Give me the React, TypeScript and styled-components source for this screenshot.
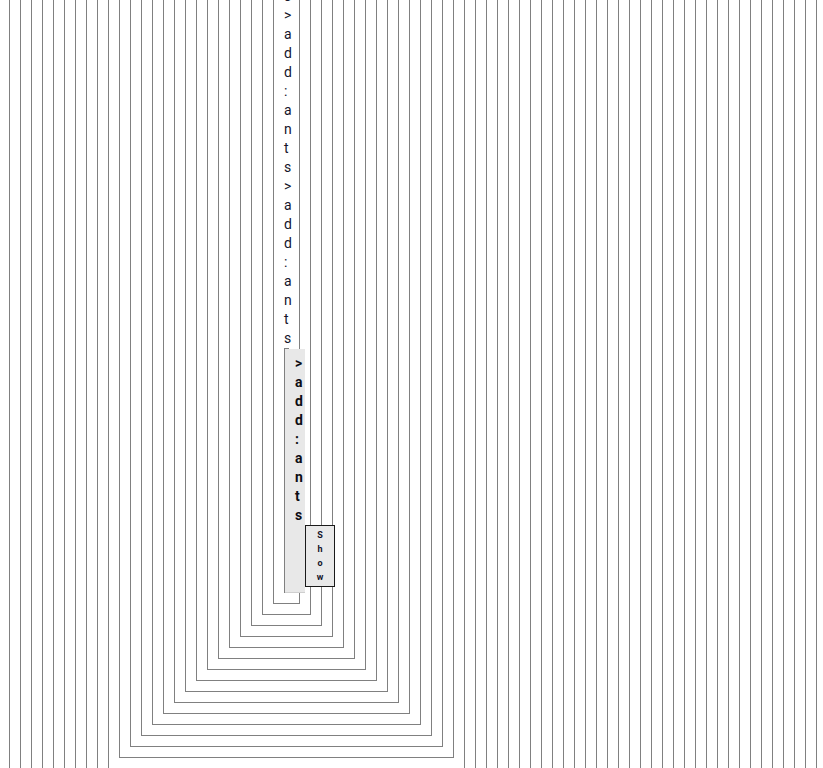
import React from 'react';
import styled, { createGlobalStyle, css } from 'styled-components';

const GlobalStyle = createGlobalStyle`
  html, body {
    margin: 0;
    padding: 0;
    overflow: hidden;
    background: #ffffff;
  }
  body {
    font-family: Roboto, "Liberation Sans", Arial, sans-serif;
    color: #111111;
  }
  * { box-sizing: border-box; }
`;

const Page = styled.div`
  height: 768px;
  overflow: hidden;
  padding: 0 6px 0 9px;
`;

const Tree = styled.div`
  margin-top: -213px;
`;

type Side = 'full' | 'right';

const Frame = styled.div<{ $side: Side }>`
  border: 1px solid #808080;
  padding: 0 10px 10px 10px;
  ${(p) =>
    p.$side === 'right' &&
    css`
      border-left: none;
      padding-left: 0;
    `}
`;

const Crumb = styled.div`
  font-size: 14px;
  line-height: 19px;
  color: #14142a;
  word-break: break-all;
  line-break: anywhere;
  white-space: normal;
`;

const LeafFrame = styled.div`
  border: 1px solid #808080;
  padding: 0;
`;

const Selected = styled.div`
  width: 20px;
  background: #e8e8e8;
  padding: 5px 0 5px 10px;
  box-shadow: 0 1px 0 #cfcfcf;
`;

const SelectedLabel = styled.div`
  font-size: 14px;
  line-height: 19px;
  font-weight: 700;
  color: #0d0d14;
  word-break: break-all;
  line-break: anywhere;
`;

const ShowButton = styled.button`
  display: block;
  width: 30px;
  margin: 0 0 0 10px;
  padding: 2px 9px;
  border: 1px solid #1a1a1a;
  border-radius: 0;
  background: #e9e9e9;
  font-family: Roboto, "Liberation Sans", Arial, sans-serif;
  font-size: 9px;
  font-weight: 700;
  line-height: 14px;
  color: #14142a;
  text-align: center;
  word-break: break-all;
  line-break: anywhere;
  appearance: none;
  cursor: pointer;
`;

const levels: Side[] = [
  ...Array<Side>(10).fill('full'),
  ...Array<Side>(23).fill('right'),
  ...Array<Side>(15).fill('full'),
];

const crumbs = ['> add: ants', '> add: ants', '> add: ants'];

function Leaf() {
  return (
    <>
      {crumbs.map((c, i) => (
        <Crumb key={i}>{c}</Crumb>
      ))}
      <LeafFrame>
        <Selected>
          <SelectedLabel>&gt; add: ants</SelectedLabel>
          <ShowButton type="button">Show</ShowButton>
        </Selected>
      </LeafFrame>
    </>
  );
}

export default function App() {
  const nested = levels.reduceRight<React.ReactNode>(
    (child, side, i) => (
      <Frame key={i} $side={side}>
        {child}
      </Frame>
    ),
    <Leaf />
  );
  return (
    <>
      <GlobalStyle />
      <Page>
        <Tree>{nested}</Tree>
      </Page>
    </>
  );
}
